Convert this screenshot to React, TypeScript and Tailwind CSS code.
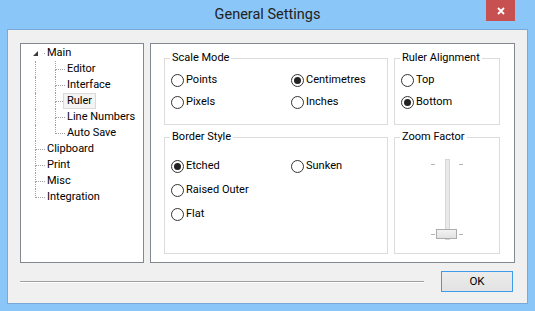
import React from "react";

type TreeRow = { label: string; depth: 0 | 1; last?: boolean; selected?: boolean };

const treeRows: TreeRow[] = [
  { label: "Editor", depth: 1 },
  { label: "Interface", depth: 1 },
  { label: "Ruler", depth: 1, selected: true },
  { label: "Line Numbers", depth: 1 },
  { label: "Auto Save", depth: 1, last: true },
  { label: "Clipboard", depth: 0 },
  { label: "Print", depth: 0 },
  { label: "Misc", depth: 0 },
  { label: "Integration", depth: 0, last: true },
];

function Connector({ last }: { last?: boolean }) {
  return (
    <span className="flex h-[16px] w-[12px] shrink-0 flex-col">
      <span className="h-[9px] w-[10px] border-b border-l border-dotted border-[#a0a0a0]" />
      <span
        className={`flex-1 border-l border-dotted ${last ? "border-transparent" : "border-[#a0a0a0]"}`}
      />
    </span>
  );
}

function Radio({ label, checked }: { label: string; checked?: boolean }) {
  return (
    <div className="flex items-center">
      <span className="flex h-[13px] w-[13px] shrink-0 items-center justify-center rounded-full border border-[#333] bg-white">
        {checked && <span className="h-[7px] w-[7px] rounded-full bg-[#222]" />}
      </span>
      <span className="ml-[2px] whitespace-nowrap">{label}</span>
    </div>
  );
}

function Group({
  title,
  className,
  children,
}: {
  title: string;
  className: string;
  children: React.ReactNode;
}) {
  return (
    <fieldset className={`border border-[#dcdcdc] ${className}`}>
      <legend className="ml-[5px] whitespace-nowrap px-[2px] leading-[14px]">{title}</legend>
      {children}
    </fieldset>
  );
}

export default function App() {
  return (
    <div className="flex h-[311px] w-[535px] flex-col bg-[#8ac6f7] font-['Roboto','Liberation_Sans',sans-serif] text-[11px] text-black">
      {/* Title bar */}
      <div className="relative flex h-[29px] shrink-0 items-center justify-center">
        <span className="text-[14.5px] text-[#222]">General Settings</span>
        <div className="absolute right-[20px] top-0 flex h-[21px] w-[29px] items-center justify-center bg-[#c75050]">
          <svg width="8" height="8" viewBox="0 0 8 8">
            <path d="M1 1 L7 7 M7 1 L1 7" stroke="#fff" strokeWidth="1.8" />
          </svg>
        </div>
      </div>

      {/* Client area */}
      <div className="mx-[7px] flex h-[275px] flex-col border border-[#78a9d8] bg-[#f0f0f0] px-[12px] pt-[13px]">
        <div className="flex h-[220px] gap-[6px]">
          {/* Tree */}
          <div className="w-[124px] border border-[#828790] bg-white pl-[14px] pt-[1px]">
            <div className="flex h-[16px] items-center">
              <svg width="14" height="16" viewBox="0 0 14 16" className="-ml-[2px] shrink-0">
                <path d="M5 6 L5 11 L0 11 Z" fill="#3a3a3a" />
                <rect x="11" y="8" width="1" height="1" fill="#a0a0a0" />
              </svg>
              <span className="leading-[16px]">Main</span>
            </div>
            {treeRows.map((row) => (
              <div key={row.label} className="flex h-[16px] items-center">
                {row.depth === 1 && (
                  <span className="h-[16px] w-[20px] shrink-0 border-l border-dotted border-[#a0a0a0]" />
                )}
                <Connector last={row.last} />
                {row.selected ? (
                  <span className="-ml-[4px] flex h-[16px] items-center border border-[#dadada] bg-[#f4f4f4] px-[3px]">
                    {row.label}
                  </span>
                ) : (
                  <span className="whitespace-nowrap leading-[16px]">{row.label}</span>
                )}
              </div>
            ))}
          </div>

          {/* Settings panel */}
          <div className="flex w-[365px] flex-col gap-[5px] border border-[#828790] bg-white pl-[13px] pt-[7px]">
            <div className="flex gap-[6px]">
              <Group title="Scale Mode" className="h-[74px] w-[224px]">
                <div className="mt-[4px] grid grid-cols-[120px_1fr] pl-[6px]">
                  <div className="flex h-[22px] items-center">
                    <Radio label="Points" />
                  </div>
                  <div className="flex h-[22px] items-center">
                    <Radio label="Centimetres" checked />
                  </div>
                  <div className="flex h-[22px] items-center">
                    <Radio label="Pixels" />
                  </div>
                  <div className="flex h-[22px] items-center">
                    <Radio label="Inches" />
                  </div>
                </div>
              </Group>
              <Group title="Ruler Alignment" className="h-[74px] w-[106px]">
                <div className="mt-[4px] pl-[6px]">
                  <div className="flex h-[22px] items-center">
                    <Radio label="Top" />
                  </div>
                  <div className="flex h-[22px] items-center">
                    <Radio label="Bottom" checked />
                  </div>
                </div>
              </Group>
            </div>

            <div className="flex gap-[6px]">
              <Group title="Border Style" className="h-[124px] w-[224px]">
                <div className="mt-[10px] grid grid-cols-[120px_1fr] pl-[6px]">
                  <div className="flex h-[24px] items-center">
                    <Radio label="Etched" checked />
                  </div>
                  <div className="flex h-[24px] items-center">
                    <Radio label="Sunken" />
                  </div>
                  <div className="flex h-[24px] items-center">
                    <Radio label="Raised Outer" />
                  </div>
                  <div />
                  <div className="flex h-[24px] items-center">
                    <Radio label="Flat" />
                  </div>
                </div>
              </Group>
              <Group title="Zoom Factor" className="h-[124px] w-[106px]">
                <div className="mt-[14px] flex justify-center">
                  <div className="relative h-[83px] w-[34px]">
                    <div className="absolute left-[15px] top-[1px] h-[81px] w-[5px] border border-[#d6d6d6] bg-[#e7eaea]" />
                    <div className="absolute left-[1px] top-[6px] h-px w-[4px] bg-[#b4b4b4]" />
                    <div className="absolute left-[29px] top-[6px] h-px w-[4px] bg-[#b4b4b4]" />
                    <div className="absolute left-[1px] top-[76px] h-px w-[4px] bg-[#b4b4b4]" />
                    <div className="absolute left-[29px] top-[76px] h-px w-[4px] bg-[#b4b4b4]" />
                    <div className="absolute left-[6px] top-[71px] h-[10px] w-[21px] border border-[#acacac] bg-gradient-to-b from-[#f2f2f2] to-[#e2e2e2]" />
                  </div>
                </div>
              </Group>
            </div>
          </div>
        </div>

        {/* Bottom bar */}
        <div className="mt-[8px] flex">
          <div className="mt-[10px] h-[2px] w-[404px] border-b border-t border-b-white border-t-[#a0a0a0]" />
          <button className="ml-[17px] h-[21px] w-[72px] border border-[#3c9cea] bg-gradient-to-b from-[#ececec] to-[#e2e2e2] text-[11.5px] leading-[19px]">
            OK
          </button>
        </div>
      </div>
    </div>
  );
}
